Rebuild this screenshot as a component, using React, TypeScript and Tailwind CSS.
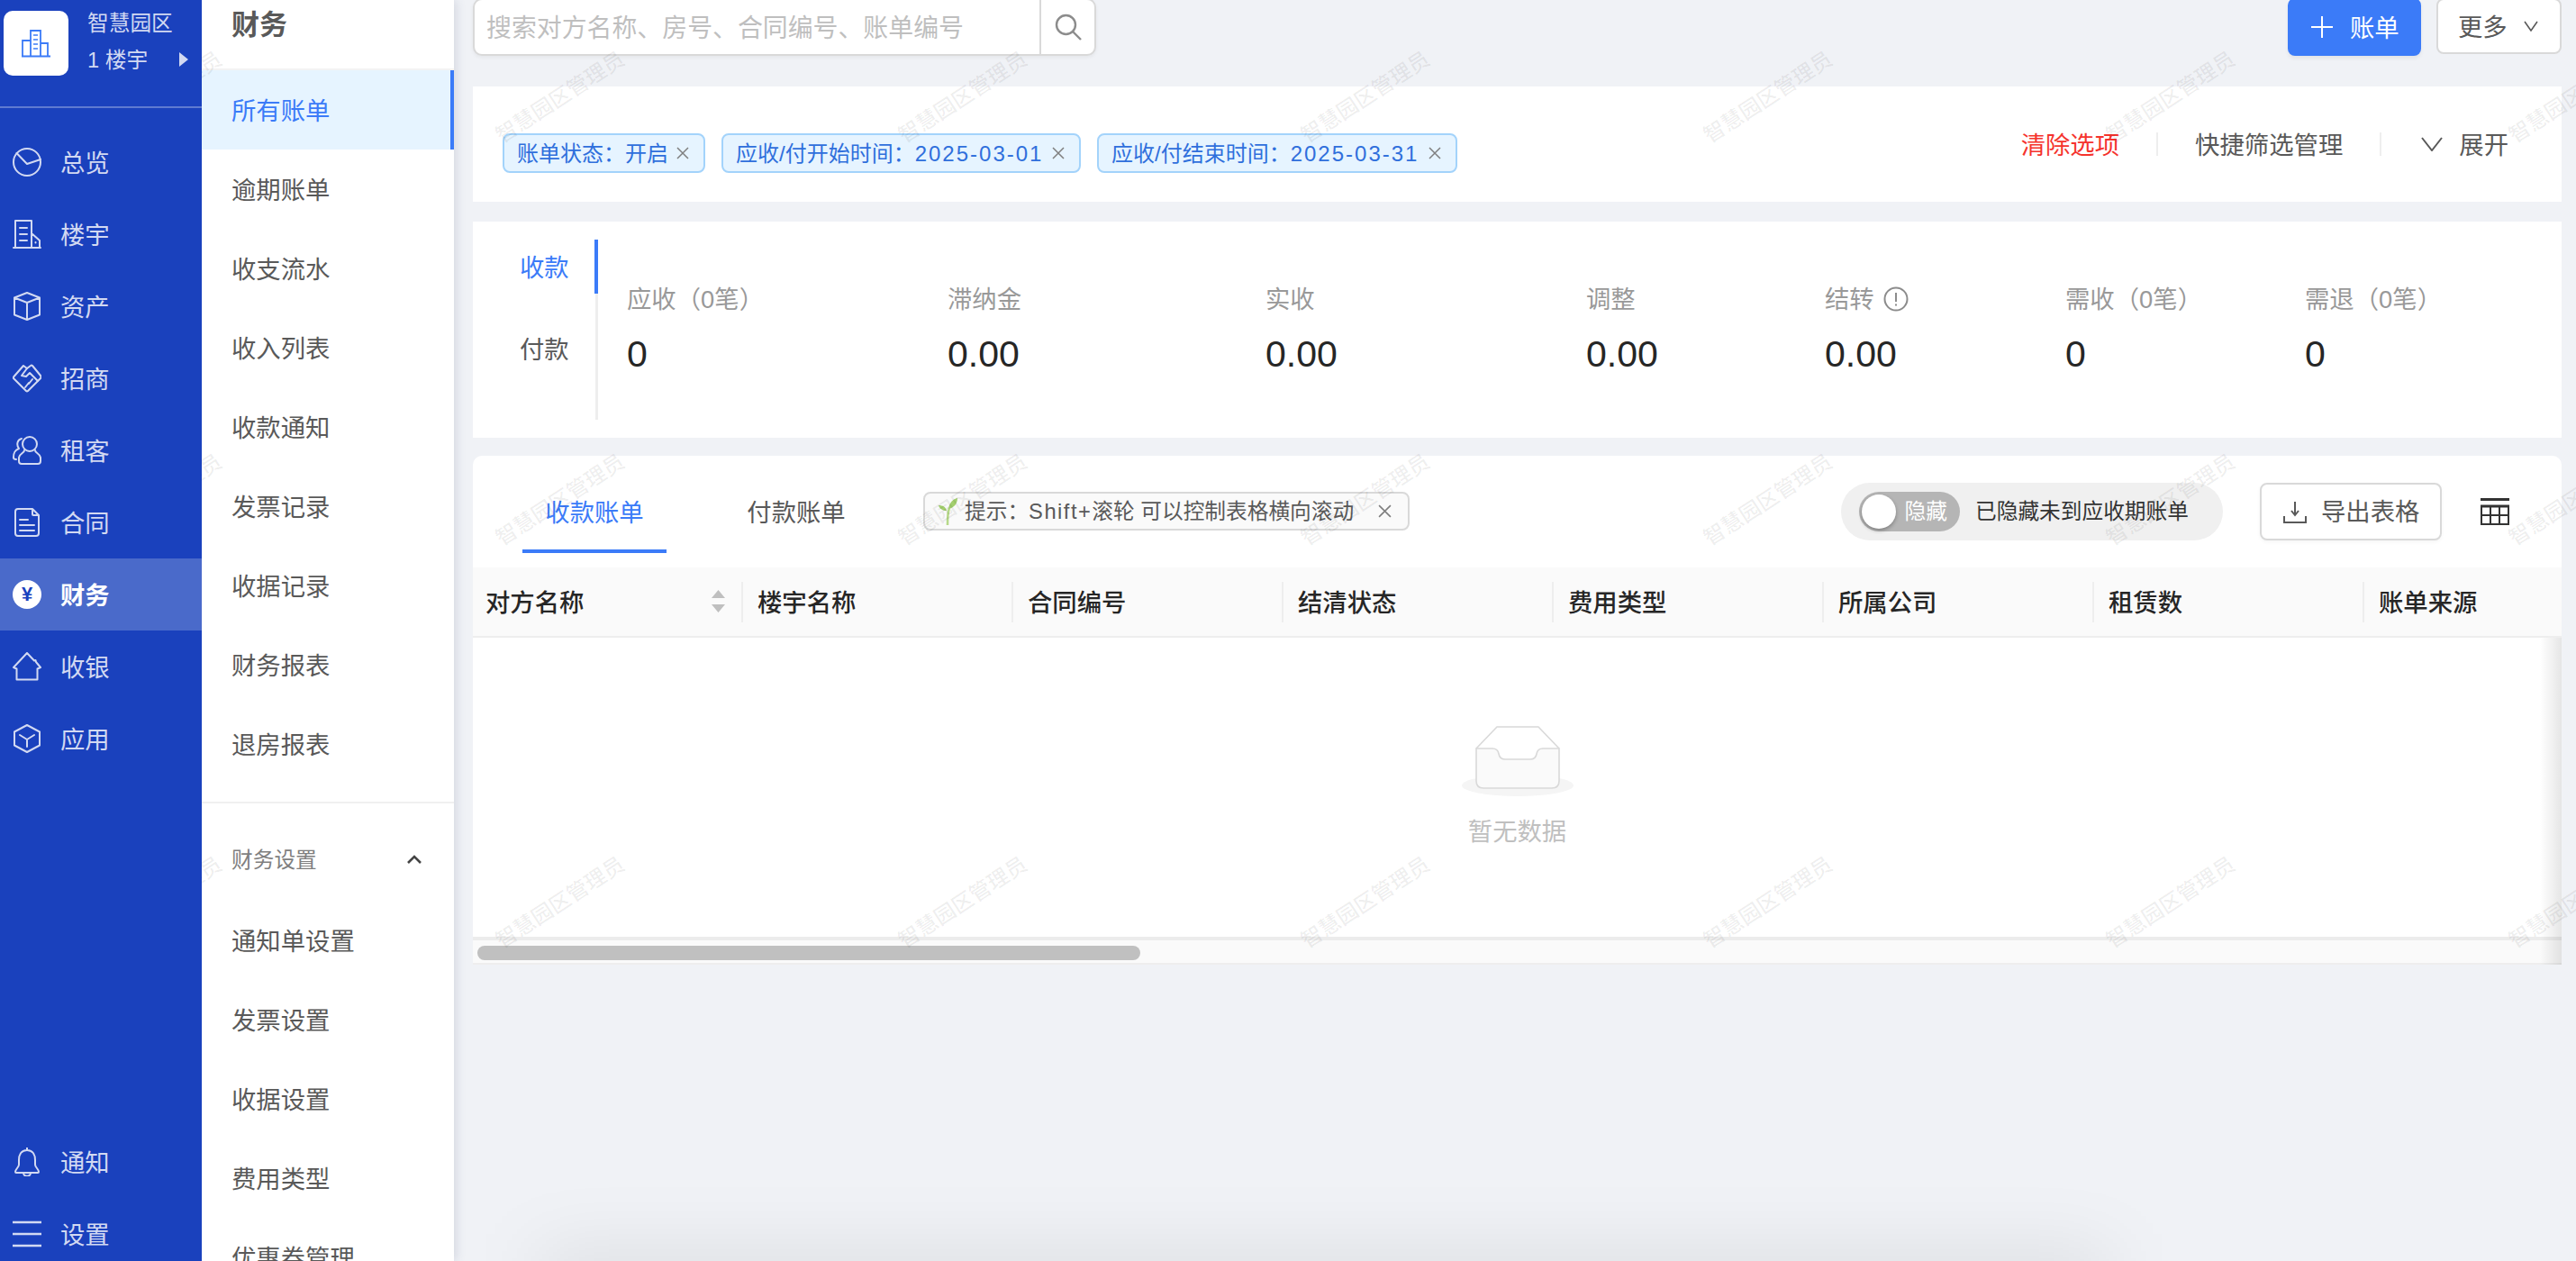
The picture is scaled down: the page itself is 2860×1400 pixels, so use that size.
import React from "react";

const S = { fill: "none", stroke: "currentColor", strokeWidth: 2, strokeLinejoin: "round" as const, strokeLinecap: "round" as const };

function Ico({ children }: { children: React.ReactNode }) {
  return (
    <svg viewBox="0 0 32 32" className="h-[32px] w-[32px] shrink-0" {...S}>
      {children}
    </svg>
  );
}

const icons: Record<string, React.ReactNode> = {
  总览: (
    <Ico>
      <circle cx="16" cy="16" r="15" />
      <path d="M4.5 6 L16 18 L31 13" />
    </Ico>
  ),
  楼宇: (
    <Ico>
      <path d="M1 31 H31 M3 31 V1 H21 V31 M21 15 L30 23 V31 M8 9 H16 M8 16 H16 M8 23 H16" />
      <path d="M25.5 25 v.5" />
    </Ico>
  ),
  资产: (
    <Ico>
      <path d="M16 1 L30 6.5 V25.5 L16 31 L2 25.5 V6.5 Z M2 6.5 L16 12 L30 6.5 M16 12 V31" />
    </Ico>
  ),
  招商: (
    <Ico>
      <path d="M12 2 L16 5 L20 2 Q21 1 22 2 L31 13 Q32 15 31 16 L17 30 Q16 31 15 30 L1 16 Q0.5 15 1.5 14 Z" />
      <path d="M16 5 L10 13 L15 14 L19 10 L28 19 M22 17 L18 22 M18 21 L14 26" />
    </Ico>
  ),
  租客: (
    <Ico>
      <circle cx="19" cy="9" r="8" />
      <path d="M13 16 C13 19 8 19 7 24 V28 Q7 31 10 31 H28 Q31 31 31 28 V24 C30 19 25 19 25 16" />
      <path d="M10 3 C5 4 4 10 7 14 C2 16 1 19 1 24 Q1 26 4 26" />
    </Ico>
  ),
  合同: (
    <Ico>
      <path d="M3 4 Q3 1 6 1 H22 L29 8 V28 Q29 31 26 31 H6 Q3 31 3 28 Z M22 1 V7 Q22 8 23 8 H29" />
      <path d="M8 13 H17 M8 19 H24 M8 25 H24" />
    </Ico>
  ),
  收银: (
    <Ico>
      <path d="M16 1 L24 9.5 L25.5 9 L26 11 L31 17 L27.5 18.5 V30.5 H4.5 V18.5 L1 17 Z" />
    </Ico>
  ),
  应用: (
    <Ico>
      <path d="M16 1 L30 8.5 V23.5 L16 31 L2 23.5 V8.5 Z M8 12 L16 17 L24 12 M16 17 V25" />
    </Ico>
  ),
  通知: (
    <Ico>
      <path d="M16 0.5 V3 C9 3 7 9 7 14 V19 C7 22 3 24 3 27 Q3 28 4 28 H28 Q29 28 29 27 C29 24 25 22 25 19 V14 C25 9 23 3 16 3 M12 28 C12 33 20 33 20 28" />
    </Ico>
  ),
  设置: (
    <Ico>
      <path d="M0 3 H32 M0 16 H32 M0 29 H32" strokeWidth="2.4" strokeLinecap="butt" />
    </Ico>
  ),
};

function NavRow({ label, active }: { label: string; active?: boolean }) {
  return (
    <div
      className={
        active
          ? "flex h-[80px] items-center bg-[#4a6aca] pl-[14px] font-bold text-white"
          : "flex h-[80px] items-center pl-[14px] text-[#d2d9f2]"
      }
    >
      {active ? (
        <div className="flex h-[32px] w-[32px] shrink-0 items-center justify-center rounded-full bg-white text-[22px] font-bold leading-none text-[#1a41bd]">
          ¥
        </div>
      ) : (
        icons[label]
      )}
      <span className="ml-[21px] pt-[3px] text-[27.36px]">{label}</span>
    </div>
  );
}

function Sidebar() {
  const main = ["总览", "楼宇", "资产", "招商", "租客", "合同", "财务", "收银", "应用"];
  return (
    <aside className="relative z-20 flex h-[1400px] w-[224px] shrink-0 flex-col bg-[#1a41bd]">
      <div className="flex h-[120px] shrink-0 border-b-2 border-white/30 pl-[4px] pt-[12px]">
        <div className="flex h-[72px] w-[72px] items-center justify-center rounded-[10px] bg-white">
          <svg viewBox="0 0 34 32" className="h-[32px] w-[34px]" fill="none" stroke="#3b7bf8" strokeWidth="1.8">
            <path d="M1 30.5 H33 M2 30 V13 H11 M11 30 V2 H22 V30 M22 16 H30 V30" />
            <path d="M14 7 H19 M14 12 H19 M14 17 H19 M14 22 H19" strokeWidth="1.4" />
          </svg>
        </div>
        <div className="ml-[21px] w-[112px] text-[#d2d9f2]">
          <div className="-mt-[2px] text-[23.7px] leading-[32px]">智慧园区</div>
          <div className="mt-[8px] flex h-[32px] items-center text-[23.7px]">
            <span className="pt-[3px]">1 楼宇</span>
            <svg viewBox="0 0 10 16" className="ml-auto h-[16px] w-[10px]" fill="#d2d9f2">
              <path d="M0 0 L10 8 L0 16 Z" />
            </svg>
          </div>
        </div>
      </div>
      <nav className="mt-[20px]">
        {main.map((m) => (
          <NavRow key={m} label={m} active={m === "财务"} />
        ))}
      </nav>
      <div className="mt-auto -mb-[10px] overflow-visible">
        <NavRow label="通知" />
        <NavRow label="设置" />
      </div>
    </aside>
  );
}

function SubItem({ label, active }: { label: string; active?: boolean }) {
  return (
    <div
      className={
        active
          ? "flex h-[88px] items-center border-r-[4px] border-[#3b7bf8] bg-[#e6f4ff] pl-[33px] pt-[3px] text-[27.36px] text-[#3b7bf8]"
          : "flex h-[88px] items-center pl-[33px] pt-[3px] text-[27.36px] text-[#595959]"
      }
    >
      {label}
    </div>
  );
}

function SubNav() {
  const a = ["逾期账单", "收支流水", "收入列表", "收款通知", "发票记录", "收据记录", "财务报表", "退房报表"];
  const b = ["通知单设置", "发票设置", "收据设置", "费用类型", "优惠券管理"];
  return (
    <div className="relative z-0 h-[1400px] w-[280px] shrink-0 overflow-visible bg-white shadow-[3px_0_10px_rgba(60,70,110,0.14)]">
      <div className="flex h-[78px] items-start border-b-2 border-[#f3f3f3] pl-[33px] pt-[8px] text-[31px] font-bold leading-[40px] text-[#595959]">
        财务
      </div>
      <SubItem label="所有账单" active />
      {a.map((x) => (
        <SubItem key={x} label={x} />
      ))}
      <div className="mt-[20px] h-[2px] bg-[#f0f0f0]" />
      <div className="flex h-[108px] items-center pl-[33px] pr-[36px] pt-[16px] text-[23.7px] text-[#7f7f7f]">
        <span className="pt-[3px]">财务设置</span>
        <svg viewBox="0 0 16 10" className="ml-auto h-[10px] w-[16px]" fill="none" stroke="#444" strokeWidth="2.6">
          <path d="M1 9 L8 2 L15 9" />
        </svg>
      </div>
      <div className="h-[400px] overflow-hidden">
        {b.map((x) => (
          <SubItem key={x} label={x} />
        ))}
      </div>
    </div>
  );
}

function Close({ size = 14, color = "#7f7f7f" }: { size?: number; color?: string }) {
  return (
    <svg viewBox="0 0 14 14" style={{ width: size, height: size }} className="shrink-0" fill="none" stroke={color} strokeWidth="1.5">
      <path d="M1 1 L13 13 M13 1 L1 13" />
    </svg>
  );
}

function Tag({ text, date, cls }: { text: string; date?: string; cls: string }) {
  return (
    <div className={"mt-[20px] flex h-[44px] items-center rounded-[8px] border-2 border-[#a3d3fb] bg-[#e6f4ff] text-[24px] text-[#2f6fdc] " + cls}>
      <span className="whitespace-nowrap pt-[2px]">
        {text}
        {date && <span className="tracking-[2px]">{date}</span>}
      </span>
      <span className="ml-auto">
        <Close />
      </span>
    </div>
  );
}

function TopBar() {
  return (
    <div className="-mt-[2px] flex h-[64px] shrink-0">
      <div className="flex h-[64px] w-[692px] rounded-[10px] border-2 border-[#d9d9d9] bg-white shadow-[0_2px_4px_rgba(0,0,0,0.05)]">
        <div className="flex flex-1 items-center whitespace-nowrap pl-[13px] pt-[3px] text-[27.9px] text-[#bfbfbf]">搜索对方名称、房号、合同编号、账单编号</div>
        <div className="flex w-[61px] items-center justify-center border-l-2 border-[#d9d9d9] text-[#8c8c8c]">
          <svg viewBox="0 0 30 30" className="h-[30px] w-[30px]" fill="none" stroke="currentColor" strokeWidth="2.4">
            <circle cx="12.5" cy="12.5" r="10.5" />
            <path d="M20 20 L29 29" />
          </svg>
        </div>
      </div>
      <div className="ml-auto flex h-[64px] w-[148px] items-center rounded-[8px] bg-[#3b7bf8] pl-[26px] text-white shadow-[0_3px_4px_rgba(0,0,0,0.06)]">
        <svg viewBox="0 0 24 24" className="h-[24px] w-[24px]" fill="none" stroke="currentColor" strokeWidth="2">
          <path d="M12 0 V24 M0 12 H24" />
        </svg>
        <span className="ml-[19px] pt-[3px] text-[27.36px]">账单</span>
      </div>
      <div className="ml-[17px] flex h-[62px] w-[139px] items-center rounded-[8px] border-2 border-[#d9d9d9] bg-white pl-[22px] text-[27.36px] text-[#595959]">
        <span className="pt-[3px]">更多</span>
        <svg viewBox="0 0 16 12" className="ml-[18px] h-[12px] w-[16px]" fill="none" stroke="#595959" strokeWidth="1.6">
          <path d="M1 1 L8 11 L15 1" />
        </svg>
      </div>
    </div>
  );
}

function FilterCard() {
  return (
    <div className="mt-[34px] flex h-[128px] shrink-0 items-center bg-white pl-[33px]">
      <Tag text="账单状态：开启" cls="w-[225px] pl-[14px] pr-[16px]" />
      <Tag text="应收/付开始时间：" date="2025-03-01" cls="ml-[18px] w-[399px] pl-[14px] pr-[16px]" />
      <Tag text="应收/付结束时间：" date="2025-03-31" cls="ml-[18px] w-[400px] pl-[14px] pr-[16px]" />
      <div className="ml-auto flex items-center text-[27.36px] text-[#595959]">
        <span className="pt-[3px] text-[#f5332d]">清除选项</span>
        <span className="mx-[41px] h-[26px] w-[2px] bg-[#eeeeee]" />
        <span className="pt-[3px]">快捷筛选管理</span>
        <span className="ml-[41px] mr-[44px] h-[26px] w-[2px] bg-[#eeeeee]" />
        <svg viewBox="0 0 24 16" className="h-[16px] w-[24px]" fill="none" stroke="#595959" strokeWidth="2">
          <path d="M1 1 L12 15 L23 1" />
        </svg>
        <span className="ml-[18px] mr-[59px] pt-[3px]">展开</span>
      </div>
    </div>
  );
}

function Stat({ label, value, cls, info }: { label: string; value: string; cls: string; info?: boolean }) {
  return (
    <div className={cls}>
      <div className="flex h-[38px] items-center whitespace-nowrap text-[27.36px] text-[#999999]">
        <span className="pt-[1px]">{label}</span>
        {info && (
          <svg viewBox="0 0 28 28" className="ml-[10px] h-[28px] w-[28px]" fill="none" stroke="#8c8c8c" strokeWidth="2">
            <circle cx="14" cy="14" r="12.5" />
            <path d="M14 7 V17 M14 19.5 V21.5" />
          </svg>
        )}
      </div>
      <div className="mt-[18px] flex h-[50px] items-center text-[41px] text-[#262626]">{value}</div>
    </div>
  );
}

function SummaryCard() {
  return (
    <div className="mt-[22px] flex h-[240px] shrink-0 bg-white pt-[20px]">
      <div className="h-[200px] w-[139px] border-r-[3px] border-[#eeeeee] text-[27.36px]">
        <div className="-mr-[3px] flex h-[60px] items-center border-r-[4px] border-[#3b7bf8] pl-[52px] pt-[3px] text-[#3b7bf8]">收款</div>
        <div className="mt-[33px] flex h-[60px] items-center pl-[52px] text-[#595959]">付款</div>
      </div>
      <div className="ml-[32px] flex pt-[47px]">
        <Stat cls="w-[356px]" label="应收（0笔）" value="0" />
        <Stat cls="w-[353px]" label="滞纳金" value="0.00" />
        <Stat cls="w-[356px]" label="实收" value="0.00" />
        <Stat cls="w-[265px]" label="调整" value="0.00" />
        <Stat cls="w-[267px]" label="结转" value="0.00" info />
        <Stat cls="w-[266px]" label="需收（0笔）" value="0" />
        <Stat cls="w-[260px]" label="需退（0笔）" value="0" />
      </div>
    </div>
  );
}

function Head({ label, sort, first }: { label: string; sort?: boolean; first?: boolean }) {
  return (
    <div className={first ? "flex w-[298px] shrink-0 items-center pl-[14px]" : "flex w-[300px] shrink-0 items-center"}>
      {!first && <span className="h-[45px] w-[2px] bg-[#eeeeee]" />}
      <span className={first ? "whitespace-nowrap pt-[3px]" : "ml-[16px] whitespace-nowrap pt-[3px]"}>{label}</span>
      {sort && (
        <svg viewBox="0 0 15 26" className="ml-auto mr-[18px] h-[26px] w-[15px]" fill="#bfbfbf">
          <path d="M7.5 0 L15 9 H0 Z M0 16 H15 L7.5 25 Z" />
        </svg>
      )}
    </div>
  );
}

function TableCard() {
  const cols = ["楼宇名称", "合同编号", "结清状态", "费用类型", "所属公司", "租赁数", "账单来源"];
  return (
    <div className="mt-[20px] shrink-0 overflow-hidden rounded-t-[10px] bg-white">
      <div className="flex h-[124px] items-start">
        <div className="ml-[55px] mt-[30px] flex h-[78px] w-[160px] items-center justify-center border-b-[4px] border-[#3b7bf8] pb-[7px] text-[27.36px] text-[#3b7bf8]">
          收款账单
        </div>
        <div className="ml-[64px] mt-[30px] flex h-[78px] w-[160px] items-center justify-center pb-[11px] text-[27.36px] text-[#595959]">
          付款账单
        </div>
        <div className="ml-[61px] mt-[40px] flex h-[43px] w-[540px] items-center rounded-[8px] border-2 border-[#d9d9d9] bg-[#fafafa] pl-[14px] pr-[18px] text-[23.7px] text-[#595959]">
          <svg viewBox="0 0 22 32" className="h-[32px] w-[22px] shrink-0">
            <path d="M11 31 C11 22 11 17 13 12" fill="none" stroke="#b7d98a" strokeWidth="2.6" />
            <path d="M12 13 C13 6 17 2 22 1 C22 7 18 12 12 13 Z" fill="#a3cf6e" />
            <path d="M10 15 C6 15 2 13 1 9 C6 9 9 11 10 15 Z" fill="#a3cf6e" />
          </svg>
          <span className="ml-[8px] whitespace-nowrap pt-[2px]">
            提示：<span className="tracking-[1.5px]">Shift+</span>滚轮 可以控制表格横向滚动
          </span>
          <span className="ml-auto">
            <Close size={15} />
          </span>
        </div>
        <div className="ml-auto mt-[30px] flex h-[64px] w-[424px] items-center rounded-full bg-[#f0f0f0] pl-[20px]">
          <div className="relative flex h-[44px] w-[112px] items-center justify-end rounded-full bg-[#b5b5b5] pr-[14px] pt-[2px] text-[23.7px] text-white">
            <span className="absolute left-[3px] top-[3px] h-[38px] w-[38px] rounded-full bg-white shadow-[0_2px_4px_rgba(0,0,0,0.3)]" />
            隐藏
          </div>
          <span className="ml-[17px] whitespace-nowrap pt-[2px] text-[23.7px] text-[#333333]">已隐藏未到应收期账单</span>
        </div>
        <div className="ml-[41px] mt-[30px] flex h-[64px] w-[202px] items-center rounded-[8px] border-2 border-[#d9d9d9] bg-white pl-[24px] text-[27.36px] text-[#595959] shadow-[0_2px_4px_rgba(0,0,0,0.04)]">
          <svg viewBox="0 0 26 26" className="h-[26px] w-[26px] shrink-0" fill="none" stroke="currentColor" strokeWidth="2">
            <path d="M13 2 V16 M9 12 L13 17 L17 12 M1 18 V25 H25 V18" />
          </svg>
          <span className="ml-[16px] whitespace-nowrap pt-[2px]">导出表格</span>
        </div>
        <svg viewBox="0 0 32 30" className="ml-[43px] mr-[58px] mt-[47px] h-[30px] w-[32px] shrink-0" fill="none" stroke="#333333" strokeWidth="2">
          <path d="M0 1.5 H32" strokeWidth="3" />
          <path d="M0 9 H32" strokeWidth="3" />
          <path d="M1 9 V29 H31 V9 M1 19 H31 M11 9 V29 M21 9 V29" />
        </svg>
      </div>
      <div className="flex h-[78px] overflow-hidden border-b-2 border-[#eeeeee] bg-[#fafafa] text-[27.36px] font-medium text-[#262626]">
        <Head label="对方名称" sort first />
        {cols.map((c) => (
          <Head key={c} label={c} />
        ))}
      </div>
      <div className="relative">
        <div className="flex h-[332px] flex-col items-center pt-[98px]">
          <svg viewBox="0 0 124 80" className="h-[80px] w-[124px]">
            <ellipse cx="62" cy="66" rx="62" ry="12" fill="#f5f5f5" />
            <path d="M16 25 L39 1 H85 L108 25" fill="#ffffff" stroke="#d9d9d9" strokeWidth="1.6" />
            <path
              d="M16 25 V61 Q16 69 24 69 H100 Q108 69 108 61 V25 H90 Q84 25 83 31 Q82 37 76 37 H48 Q42 37 41 31 Q40 25 34 25 Z"
              fill="#fafafa"
              stroke="#d9d9d9"
              strokeWidth="1.6"
            />
          </svg>
          <div className="mt-[19px] text-[27.36px] leading-[38px] text-[#bfbfbf]">暂无数据</div>
        </div>
        <div className="h-[4px] bg-[#ececec]" />
        <div className="h-[27px] border-b-2 border-[#eeeeee] bg-[#fafafa] pl-[5px] pt-[6px]">
          <div className="h-[16px] w-[736px] rounded-[8px] bg-[#c0c0c0]" />
        </div>
        <div className="pointer-events-none absolute bottom-0 right-0 top-0 w-[24px] bg-gradient-to-r from-transparent to-black/10" />
      </div>
    </div>
  );
}

function Watermarks() {
  const cells = Array.from({ length: 21 }, (_, i) => i);
  return (
    <div className="pointer-events-none absolute left-[104px] top-[60px] z-10 grid grid-cols-[repeat(7,447px)] grid-rows-[repeat(3,447px)]">
      {cells.map((i) => (
        <div key={i} className="flex h-[97px] w-[143px] items-center justify-center">
          <span className="-rotate-[33deg] whitespace-nowrap text-[23.5px] font-medium text-black/[0.07]">智慧园区管理员</span>
        </div>
      ))}
    </div>
  );
}

export default function App() {
  return (
    <div className="relative flex h-[1400px] w-[2860px] overflow-hidden bg-[#f0f2f6] [font-family:'Liberation_Sans','Noto_Sans_CJK_SC',sans-serif]">
      <Sidebar />
      <SubNav />
      <main className="flex min-w-0 flex-1 flex-col pl-[21px] pr-[16px]">
        <TopBar />
        <FilterCard />
        <SummaryCard />
        <TableCard />
      </main>
      <Watermarks />
      <div className="pointer-events-none absolute -bottom-[44px] left-[600px] h-[50px] w-[1740px] bg-black/10 blur-2xl" />
    </div>
  );
}
